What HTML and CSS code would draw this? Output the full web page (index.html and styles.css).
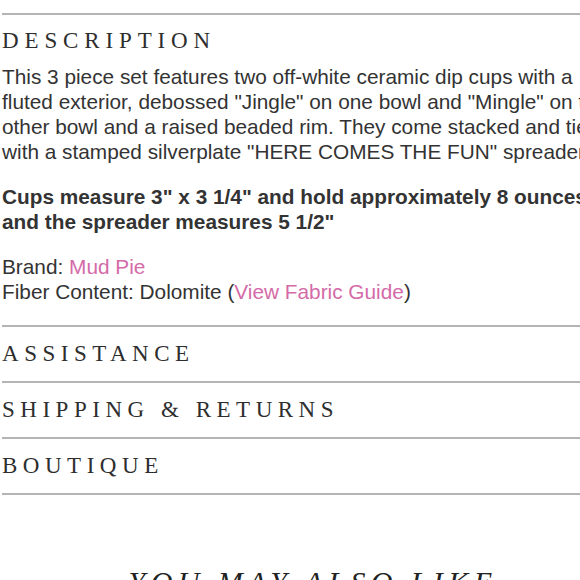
FILE: index.html
```html
<!DOCTYPE html>
<html lang="en">
<head>
<meta charset="utf-8">
<title>Product details</title>
<link rel="stylesheet" href="styles.css">
</head>
<body>
<main class="page">
  <section class="panel panel-open">
    <h2 class="panel-title panel-title-open">Description</h2>
    <p class="copy">This 3 piece set features two off-white ceramic dip cups with a fluted exterior, debossed "Jingle" on one bowl and "Mingle" on the other bowl and a raised beaded rim. They come stacked and tied with a stamped silverplate "HERE COMES THE FUN" spreader.</p>
    <p class="copy copy-bold">Cups measure 3" x 3 1/4" and hold approximately 8 ounces and the spreader measures 5 1/2"</p>
    <p class="copy">Brand: <a class="link" href="#">Mud Pie</a><br>Fiber Content: Dolomite (<a class="link" href="#">View Fabric Guide</a>)</p>
  </section>
  <section class="panel"><h2 class="panel-title">Assistance</h2></section>
  <section class="panel"><h2 class="panel-title">Shipping &amp; Returns</h2></section>
  <section class="panel panel-last"><h2 class="panel-title">Boutique</h2></section>
  <h2 class="also-like">You May Also Like</h2>
</main>
</body>
</html>
```

FILE: styles.css
```css
html, body {
  margin: 0;
  padding: 0;
  overflow: hidden;
  background: #ffffff;
}

.page {
  width: 622px;
  margin: 0 0 0 2px;
  padding-top: 13px;
  color: #333333;
  font-family: "Liberation Sans", Arial, sans-serif;
}

.panel {
  border-top: 2px solid #b4b4b4;
}

.panel-last {
  border-bottom: 2px solid #b4b4b4;
}

.panel-open {
  padding-bottom: 21px;
}

.panel-title {
  margin: 0;
  height: 54px;
  line-height: 54px;
  font-family: "Liberation Serif", "Times New Roman", serif;
  font-weight: normal;
  font-size: 23px;
  letter-spacing: 0.24em;
  text-transform: uppercase;
  color: #2e2e2e;
}

.panel-title-open {
  height: 40px;
  line-height: 40px;
  margin: 6px 0 3px;
  letter-spacing: 0.255em;
}

.copy {
  margin: 0 0 20px;
  font-size: 20.8px;
  line-height: 25px;
}

.copy:last-child {
  margin-bottom: 0;
}

.copy-bold {
  font-weight: bold;
}

.link {
  color: #d46aa8;
  text-decoration: none;
}

.also-like {
  margin: 70px 0 0;
  text-align: center;
  font-family: "Liberation Serif", "Times New Roman", serif;
  font-style: italic;
  font-weight: normal;
  font-size: 30px;
  letter-spacing: 5.4px;
  text-transform: uppercase;
  color: #222222;
}
```
